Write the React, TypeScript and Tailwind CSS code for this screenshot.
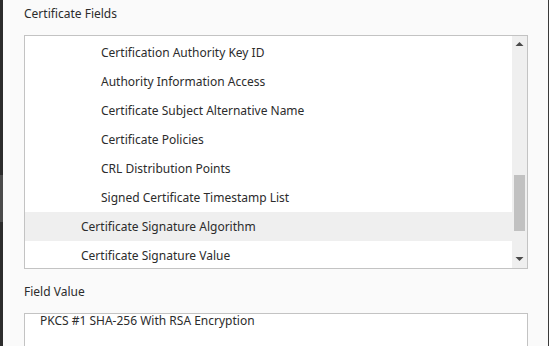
import React from "react";

const rows = [
  { label: "Certification Authority Key ID", depth: 1 },
  { label: "Authority Information Access", depth: 1 },
  { label: "Certificate Subject Alternative Name", depth: 1 },
  { label: "Certificate Policies", depth: 1 },
  { label: "CRL Distribution Points", depth: 1 },
  { label: "Signed Certificate Timestamp List", depth: 1 },
  { label: "Certificate Signature Algorithm", depth: 0, selected: true },
  { label: "Certificate Signature Value", depth: 0 },
];

function Scrollbar() {
  return (
    <div className="w-[15px] shrink-0 bg-[#efefef] flex flex-col items-center">
      <svg width="9" height="6" viewBox="0 0 9 6" className="mt-[5px]">
        <path d="M0.5 5 L4.5 1 L8.5 5 Z" fill="#4a4a4a" />
      </svg>
      <div className="mt-[128px] w-[11px] h-[56px] bg-[#c1c1c1]" />
      <div className="flex-1" />
      <svg width="9" height="6" viewBox="0 0 9 6" className="mb-[6px]">
        <path d="M0.5 1 L4.5 5 L8.5 1 Z" fill="#4a4a4a" />
      </svg>
    </div>
  );
}

export default function App() {
  return (
    <div
      className="w-[549px] h-[346px] overflow-hidden flex bg-[#fafafa] text-[#2c2c2c] text-[12px]"
      style={{ fontFamily: '"Noto Sans", "Open Sans", sans-serif' }}
    >
      <div className="w-[3px] shrink-0 bg-[#2c2c2c] flex flex-col">
        <div className="h-[175px]" />
        <div className="h-[47px] bg-[#4b4b4b]" />
      </div>

      <div className="flex-1 pl-[21px] pr-[20px]">
        <div className="h-[28px] leading-[28px]">Certificate Fields</div>

        <div className="mt-[7px] h-[234px] w-[504px] border border-[#c3c3c3] bg-white flex">
          <div className="flex-1 overflow-hidden pt-[2px]">
            {rows.map((r) => (
              <div
                key={r.label}
                className={
                  "h-[29px] leading-[29px] whitespace-nowrap " +
                  (r.depth === 1 ? "pl-[76px] " : "pl-[56px] ") +
                  (r.selected ? "bg-[#efefef]" : "")
                }
              >
                {r.label}
              </div>
            ))}
          </div>
          <Scrollbar />
        </div>

        <div className="mt-[10px] h-[25px] leading-[25px]">Field Value</div>

        <div className="mt-[9px] h-[60px] w-[504px] border border-[#c3c3c3] bg-white pl-[15px] leading-[14px]">
          PKCS #1 SHA-256 With RSA Encryption
        </div>
      </div>

      <div className="w-px shrink-0 bg-[#3a3a3a]" />
    </div>
  );
}
